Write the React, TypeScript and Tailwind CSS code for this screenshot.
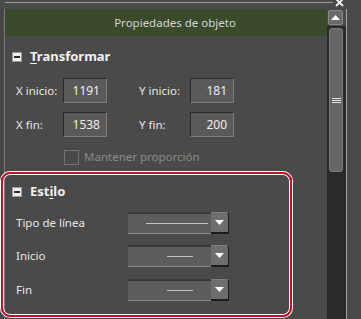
import React from "react";

function MinusBox() {
  return (
    <div className="w-[10px] h-[10px] bg-[#f0f0f0] border border-[#9a9a9a] flex items-center justify-center">
      <div className="w-[6px] h-[2px] bg-[#2a2a2a]" />
    </div>
  );
}

function NumInput({ value }: { value: string }) {
  return (
    <div className="w-[44px] h-[25px] bg-[#5a5a5a] border-t border-l border-t-[#2a2a2a] border-l-[#2a2a2a] border-b border-r border-b-[#7c7c7c] border-r-[#7c7c7c] flex items-center justify-end pr-[6px] text-[12px] text-[#eeeeee]">
      {value}
    </div>
  );
}

function Dropdown({ lineW, pr }: { lineW: number; pr: number }) {
  return (
    <div className="flex h-[22px] w-[101px]">
      <div className="flex-1 bg-[#5d5d5d] border-t-2 border-t-[#393939] border-b border-b-[#8a8a8a] flex items-center justify-end" style={{ paddingRight: pr }}>
        <div className="h-px bg-[#c4c4c4]" style={{ width: lineW }} />
      </div>
      <div className="w-[18px] bg-[#6e6e6e] rounded-tr-[3px] border-b-2 border-r border-b-[#1c1c1c] border-r-[#1c1c1c] border-t border-t-[#7e7e7e] flex items-center justify-center">
        <svg width="9" height="5" viewBox="0 0 9 5">
          <polygon points="0,0 9,0 4.5,5" fill="#ffffff" />
        </svg>
      </div>
    </div>
  );
}

export default function App() {
  return (
    <div
      className="relative w-[361px] h-[319px] overflow-hidden bg-[#4a4a4a] text-[#e6e6e6]"
      style={{ fontFamily: '"Noto Sans", "Open Sans", sans-serif' }}
    >
      {/* top strip */}
      <div className="h-[9px] flex items-start">
        <div className="mt-[2px] ml-[5px] w-[328px] h-px bg-[#9c9c9c]" />
        <svg className="ml-[2px] -mt-[1px]" width="9" height="8" viewBox="0 0 9 8">
          <path d="M1 0 L8 7 M8 0 L1 7" stroke="#f2f2f2" strokeWidth="1.8" />
        </svg>
      </div>

      {/* main */}
      <div className="flex h-[310px]">
        <div className="w-[4px] bg-[#464646]" />
        <div className="w-px bg-[#7c7c7c]" />
        <div className="w-[322px] flex flex-col">
          <div className="h-[27px] bg-[#3a4a2b] flex items-center justify-center pl-[18px] text-[11.5px] text-[#d4d4d4]">
            Propiedades de objeto
          </div>

          {/* Transformar */}
          <div className="mt-[12px] h-[18px] flex items-center pl-[7px]">
            <MinusBox />
            <div className="ml-[8px] text-[13px] font-bold text-[#f0f0f0]">
              <span className="underline underline-offset-2">T</span>ransformar
            </div>
          </div>

          <div className="mt-[12px] flex items-center pl-[11px] text-[11.5px]">
            <div className="w-[47px]">X inicio:</div>
            <NumInput value="1191" />
            <div className="ml-[32px] w-[51px]">Y inicio:</div>
            <NumInput value="181" />
          </div>
          <div className="mt-[9px] flex items-center pl-[11px] text-[11.5px]">
            <div className="w-[47px]">X fin:</div>
            <NumInput value="1538" />
            <div className="ml-[32px] w-[51px]">Y fin:</div>
            <NumInput value="200" />
          </div>

          <div className="mt-[12px] h-[16px] flex items-center pl-[59px]">
            <div className="w-[15px] h-[15px] border border-[#727272]" />
            <div className="ml-[5px] text-[11.5px] text-[#8a8a8a]">Mantener proporción</div>
          </div>

          {/* Estilo */}
          <div className="mt-[18px] h-[18px] flex items-center pl-[7px]">
            <MinusBox />
            <div className="ml-[8px] text-[13px] font-bold text-[#f0f0f0]">
              Est<span className="underline underline-offset-2">i</span>lo
            </div>
          </div>

          <div className="mt-[11px] flex items-center pl-[11px] text-[11.5px]">
            <div className="w-[112px]">Tipo de línea</div>
            <Dropdown lineW={62} pr={3} />
          </div>
          <div className="mt-[11px] flex items-center pl-[11px] text-[11.5px]">
            <div className="w-[112px]">Inicio</div>
            <Dropdown lineW={26} pr={18} />
          </div>
          <div className="mt-[12px] flex items-center pl-[11px] text-[11.5px]">
            <div className="w-[112px]">Fin</div>
            <Dropdown lineW={26} pr={18} />
          </div>
        </div>

        {/* scrollbar */}
        <div className="w-[19px] flex flex-col bg-[#2a2a2a]">
          <div className="h-[17px] bg-[#4a4a4a] pl-px pt-px">
            <div className="w-[15px] h-[15px] bg-[#6a6a6a] rounded-[2px] border border-[#888888] flex items-center justify-center">
              <svg width="9" height="5" viewBox="0 0 9 5">
                <polygon points="4.5,0 9,5 0,5" fill="#ffffff" />
              </svg>
            </div>
          </div>
          <div className="mt-[2px] ml-[2px] w-[14px] h-[144px] bg-[#666666] rounded-[3px] border border-[#7a7a7a] flex flex-col items-center justify-center gap-px">
            <div className="w-[9px] h-px bg-[#e0e0e0]" />
            <div className="w-[9px] h-px bg-[#e0e0e0]" />
            <div className="w-[9px] h-px bg-[#e0e0e0]" />
          </div>
        </div>
        <div className="w-px bg-[#a4a4a4]" />
        <div className="w-[14px] bg-[#4a4a4a]" />
      </div>

      {/* highlight annotation */}
      <div className="absolute left-[1px] top-[172px] w-[291px] h-[145px] rounded-[9px] border-2 border-[#c8102e] shadow-[0_0_0_1px_#ffffff,inset_0_0_0_1px_#ffffff] pointer-events-none" />
    </div>
  );
}
